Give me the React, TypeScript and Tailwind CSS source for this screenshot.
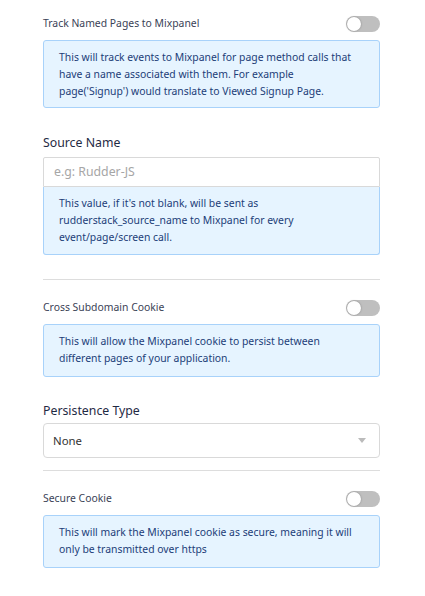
import React from "react";

function Toggle() {
  return (
    <div className="relative h-[16px] w-[34px] shrink-0 rounded-full bg-[#bfbfbf]">
      <div className="absolute left-[1px] top-[1px] h-[14px] w-[14px] rounded-full bg-white shadow-[0_0_2px_rgba(0,0,0,0.35)]" />
    </div>
  );
}

function Info({ children, className = "" }: { children: React.ReactNode; className?: string }) {
  return (
    <div
      className={
        "rounded-[3px] border border-[#a8d2fa] bg-[#e6f4ff] pl-[15px] pr-[20px] py-[8px] text-[10.4px] leading-[17px] text-[#1c3d78] " +
        className
      }
    >
      {children}
    </div>
  );
}

function ToggleRow({ label }: { label: string }) {
  return (
    <div className="flex h-[16px] items-center justify-between">
      <span className="text-[10.4px] text-[#3a4256]">{label}</span>
      <Toggle />
    </div>
  );
}

export default function App() {
  return (
    <div
      className="min-h-[596px] w-[425px] bg-white pl-[43px] pr-[45px] pt-[16px]"
      style={{ fontFamily: '"Noto Sans", "Open Sans", sans-serif' }}
    >
      <ToggleRow label="Track Named Pages to Mixpanel" />
      <Info className="mt-[8px] h-[68px]">
        This will track events to Mixpanel for page method calls that have a name associated with them. For example
        page('Signup') would translate to Viewed Signup Page.
      </Info>

      <div className="mt-[26px] text-[12.3px] leading-[18px] text-[#1f2a44]">Source Name</div>
      <div className="mt-[5px] flex h-[30px] items-center rounded-t-[2px] border border-[#d9d9d9] px-[10px] text-[12.3px] text-[#a6a6a6]">
        e.g: Rudder-JS
      </div>
      <Info className="h-[68px] rounded-t-none border-t-0">
        This value, if it's not blank, will be sent as rudderstack_source_name to Mixpanel for every
        event/page/screen call.
      </Info>

      <div className="mt-[24px] h-px bg-[#dddddd]" />

      <div className="mt-[20px]">
        <ToggleRow label="Cross Subdomain Cookie" />
      </div>
      <Info className="mt-[8px] h-[53px]">
        This will allow the Mixpanel cookie to persist between different pages of your application.
      </Info>

      <div className="mt-[25px] text-[12.3px] leading-[18px] text-[#1f2a44]">Persistence Type</div>
      <div className="mt-[3px] flex h-[35px] items-center justify-between rounded-[4px] border border-[#d9d9d9] pl-[9px] pr-[13px] text-[11.4px] text-[#333333]">
        <span>None</span>
        <svg width="8" height="5" viewBox="0 0 8 5">
          <path d="M0 0 L8 0 L4 5 Z" fill="#bbbbbb" />
        </svg>
      </div>

      <div className="mt-[12px] h-px bg-[#dddddd]" />

      <div className="mt-[20px]">
        <ToggleRow label="Secure Cookie" />
      </div>
      <Info className="mt-[8px] h-[53px]">
        This will mark the Mixpanel cookie as secure, meaning it will only be transmitted over https
      </Info>
    </div>
  );
}
